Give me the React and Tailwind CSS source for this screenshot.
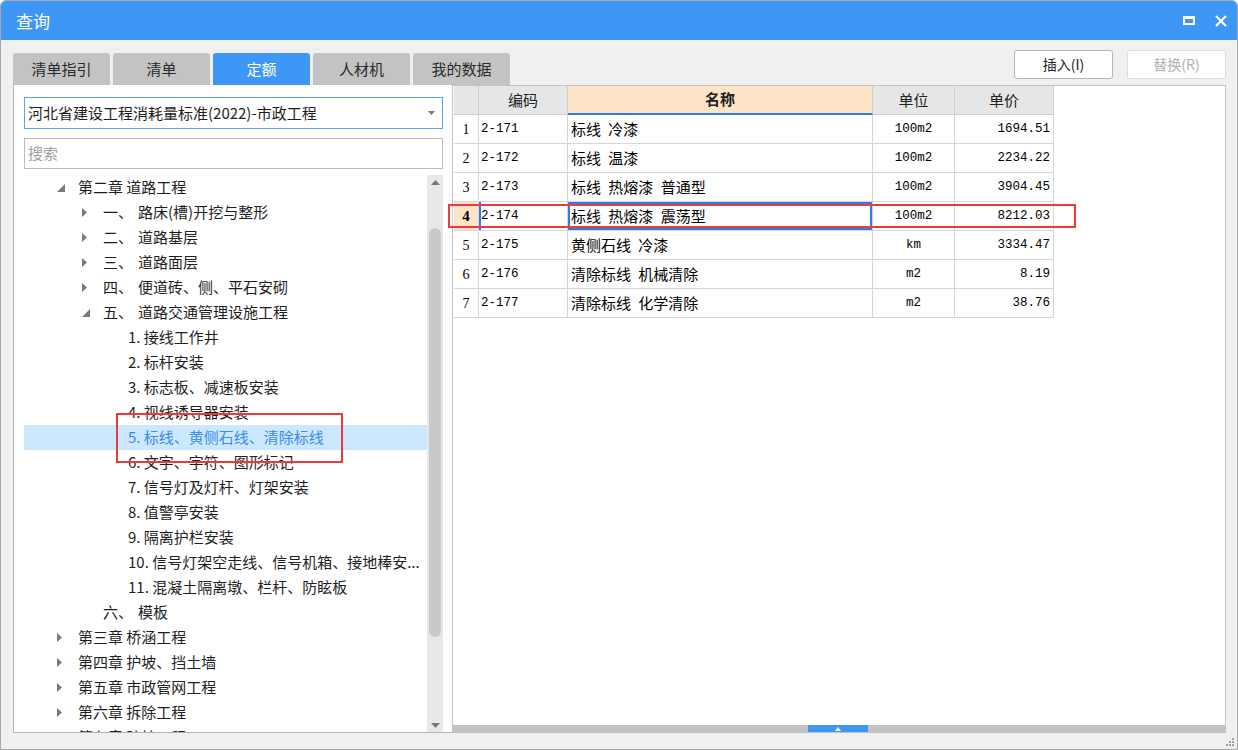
import React from 'react';

const cjk = "font-['Noto_Sans_CJK_SC',sans-serif]";
const mono = "font-['Liberation_Mono','Noto_Sans_CJK_SC',monospace]";

const tabs = ['清单指引', '清单', '定额', '人材机', '我的数据'];

const tree = [
  { lvl: 0, tri: 'open', text: '第二章 道路工程' },
  { lvl: 1, tri: 'closed', num: '一、', text: '路床(槽)开挖与整形' },
  { lvl: 1, tri: 'closed', num: '二、', text: '道路基层' },
  { lvl: 1, tri: 'closed', num: '三、', text: '道路面层' },
  { lvl: 1, tri: 'closed', num: '四、', text: '便道砖、侧、平石安砌' },
  { lvl: 1, tri: 'open', num: '五、', text: '道路交通管理设施工程' },
  { lvl: 2, text: '1. 接线工作井' },
  { lvl: 2, text: '2. 标杆安装' },
  { lvl: 2, text: '3. 标志板、减速板安装' },
  { lvl: 2, text: '4. 视线诱导器安装' },
  { lvl: 2, text: '5. 标线、黄侧石线、清除标线', sel: true },
  { lvl: 2, text: '6. 文字、字符、图形标记' },
  { lvl: 2, text: '7. 信号灯及灯杆、灯架安装' },
  { lvl: 2, text: '8. 值警亭安装' },
  { lvl: 2, text: '9. 隔离护栏安装' },
  { lvl: 2, text: '10. 信号灯架空走线、信号机箱、接地棒安...' },
  { lvl: 2, text: '11. 混凝土隔离墩、栏杆、防眩板' },
  { lvl: 1, num: '六、', text: '模板' },
  { lvl: 0, tri: 'closed', text: '第三章 桥涵工程' },
  { lvl: 0, tri: 'closed', text: '第四章 护坡、挡土墙' },
  { lvl: 0, tri: 'closed', text: '第五章 市政管网工程' },
  { lvl: 0, tri: 'closed', text: '第六章 拆除工程' },
  { lvl: 0, tri: 'closed', text: '第七章 防护工程' },
];

const pads = ['pl-[33px]', 'pl-[58px]', 'pl-[83px]'];

const rows = [
  { n: 1, code: '2-171', name: '标线 冷漆', unit: '100m2', price: '1694.51' },
  { n: 2, code: '2-172', name: '标线 温漆', unit: '100m2', price: '2234.22' },
  { n: 3, code: '2-173', name: '标线 热熔漆 普通型', unit: '100m2', price: '3904.45' },
  { n: 4, code: '2-174', name: '标线 热熔漆 震荡型', unit: '100m2', price: '8212.03', sel: true },
  { n: 5, code: '2-175', name: '黄侧石线 冷漆', unit: 'km', price: '3334.47' },
  { n: 6, code: '2-176', name: '清除标线 机械清除', unit: 'm2', price: '8.19' },
  { n: 7, code: '2-177', name: '清除标线 化学清除', unit: 'm2', price: '38.76' },
];

function Tri({ open }) {
  if (open) {
    return (
      <svg width="8" height="8" viewBox="0 0 8 8">
        <polygon points="8,0 8,8 0,8" fill="#7a7a7a" />
      </svg>
    );
  }
  return (
    <svg width="6" height="9" viewBox="0 0 6 9">
      <polygon points="0,0 5,4.5 0,9" fill="#7a7a7a" />
    </svg>
  );
}

function TreeRow({ item }) {
  return (
    <div
      className={`flex items-center h-[25px] pr-[2px] text-[15px] whitespace-nowrap ${pads[item.lvl]} ${
        item.sel ? 'bg-[#cce8ff] text-[#3a8be6]' : 'text-[#1e1e1e]'
      }`}
    >
      <span className="w-[21px] flex items-center shrink-0">
        {item.tri && <Tri open={item.tri === 'open'} />}
      </span>
      {item.num && <span className="w-[35px] shrink-0">{item.num}</span>}
      <span className="truncate min-w-0 flex-1">{item.text}</span>
    </div>
  );
}

export default function App() {
  return (
    <div className={`relative w-[1238px] h-[750px] border border-[#a8a8a8] rounded-t-[6px] overflow-hidden bg-[#f0f0f0] flex flex-col ${cjk}`}>
      {/* title bar */}
      <div className="h-[39px] bg-[#3e96f7] flex items-center justify-between pl-[15px] pr-[10px] shrink-0">
        <span className="text-white text-[17px]">查询</span>
        <div className="flex items-center gap-[20px]">
          <div className="w-[12px] h-[9px] border-2 border-t-[3px] border-white" />
          <svg width="12" height="12" viewBox="0 0 12 12">
            <path d="M1 1 L11 11 M11 1 L1 11" stroke="white" strokeWidth="2.2" />
          </svg>
        </div>
      </div>

      {/* tabs + buttons */}
      <div className="h-[45px] flex justify-between pl-[12px] pr-[11px] shrink-0">
        <div className="flex items-end gap-[3px]">
          {tabs.map((t) => (
            <div
              key={t}
              className={`w-[97px] h-[32px] rounded-t-[3px] flex items-center justify-center text-[15px] ${
                t === '定额' ? 'bg-[#3e96f7] text-white' : 'bg-[#c3c3c3] text-[#2a2a2a]'
              }`}
            >
              {t}
            </div>
          ))}
        </div>
        <div className="flex items-start gap-[14px] pt-[10px]">
          <button className="w-[99px] h-[29px] bg-white border border-[#b5b5b5] rounded-[3px] text-[14px] text-[#222]">
            插入(I)
          </button>
          <button className="w-[99px] h-[29px] bg-white border border-[#dcdcdc] rounded-[3px] text-[14px] text-[#b0b0b0]">
            替换(R)
          </button>
        </div>
      </div>

      {/* content */}
      <div className="h-[648px] flex pl-[12px] pr-[11px] shrink-0">
        {/* left panel */}
        <div className="w-[439px] bg-white border-l border-b border-[#b4b4b4] flex flex-col pl-[10px]">
          <div className="mt-[12px] w-[419px] h-[32px] border border-[#5aa4ef] flex items-center justify-between pl-[3px] pr-[7px] text-[15px] text-[#1e1e1e]">
            <span>河北省建设工程消耗量标准(2022)-市政工程</span>
            <svg width="7" height="4" viewBox="0 0 7 4">
              <polygon points="0,0 7,0 3.5,4" fill="#777" />
            </svg>
          </div>
          <div className="mt-[9px] w-[419px] h-[31px] border border-[#bcbcbc] flex items-center pl-[3px] text-[15px] text-[#a0a0a0]">
            搜索
          </div>
          <div className="mt-[6px] flex-1 flex min-h-0">
            <div className="w-[403px] overflow-hidden">
              {tree.map((it, i) => (
                <TreeRow key={i} item={it} />
              ))}
            </div>
            <div className="w-[16px] bg-[#e8e8e8] flex flex-col items-center">
              <div className="h-[14px] flex items-center justify-center">
                <svg width="9" height="5" viewBox="0 0 9 5">
                  <polygon points="0,5 9,5 4.5,0" fill="#777" />
                </svg>
              </div>
              <div className="mt-[39px] w-[12px] h-[409px] rounded-full bg-[#c9c9c9]" />
              <div className="flex-1" />
              <div className="h-[14px] flex items-center justify-center">
                <svg width="9" height="5" viewBox="0 0 9 5">
                  <polygon points="0,0 9,0 4.5,5" fill="#777" />
                </svg>
              </div>
            </div>
          </div>
        </div>

        {/* right panel */}
        <div className="w-[774px] bg-white border border-[#c2c2c2] flex flex-col">
          <div className="flex-1 pl-[1px] text-black">
            <div className="grid grid-cols-[25px_89px_305px_82px_99px] w-[600px]">
              <div className="h-[29px] bg-[#e6e6e6] border-r border-b border-[#d0d0d0]" />
              <div className="h-[29px] bg-[#e6e6e6] border-r border-b border-[#d0d0d0] flex items-center justify-center text-[15px] text-[#222]">编码</div>
              <div className="h-[29px] bg-[#fde4c6] border-r border-[#d0d0d0] border-b-2 border-b-[#2f7ce4] flex items-center justify-center text-[15px] font-bold text-[#222]">名称</div>
              <div className="h-[29px] bg-[#e6e6e6] border-r border-b border-[#d0d0d0] flex items-center justify-center text-[15px] text-[#222]">单位</div>
              <div className="h-[29px] bg-[#e6e6e6] border-r border-b border-[#d0d0d0] flex items-center justify-center text-[15px] text-[#222]">单价</div>
              {rows.map((r) => (
                <React.Fragment key={r.n}>
                  <div
                    className={`h-[29px] border-r border-b border-[#d6d6d6] flex items-center justify-center font-['Liberation_Serif',serif] text-[14px] ${
                      r.sel ? 'bg-[#fde4c6] font-bold text-[15px]' : 'bg-white'
                    }`}
                  >
                    {r.n}
                  </div>
                  <div
                    className={`h-[29px] border-r border-b border-[#d6d6d6] flex items-center pl-[2px] text-[12.5px] ${mono} ${
                      r.sel ? 'shadow-[inset_2px_0_0_#2f7ce4]' : ''
                    }`}
                  >
                    {r.code}
                  </div>
                  <div
                    className={`h-[29px] border-r border-b border-[#d6d6d6] flex items-center pl-[3px] text-[15px] [word-spacing:4px] ${
                      r.sel ? 'shadow-[inset_0_0_0_2px_#2f7ce4]' : ''
                    }`}
                  >
                    {r.name}
                  </div>
                  <div className={`h-[29px] border-r border-b border-[#d6d6d6] flex items-center justify-center text-[12.5px] ${mono}`}>
                    {r.unit}
                  </div>
                  <div className={`h-[29px] border-r border-b border-[#d6d6d6] flex items-center justify-end pr-[3px] text-[12.5px] ${mono}`}>
                    {r.price}
                  </div>
                </React.Fragment>
              ))}
            </div>
          </div>
          <div className="h-[7px] bg-[#c3c3c3] flex">
            <div className="ml-[355px] w-[60px] h-[7px] bg-[#3e96f7] flex items-center justify-center">
              <svg width="6" height="4" viewBox="0 0 6 4">
                <polygon points="0,4 6,4 3,0" fill="white" />
              </svg>
            </div>
          </div>
        </div>
      </div>

      {/* bottom strip with resize grip */}
      <div className="flex-1 flex justify-end items-end pr-[2px] pb-[2px]">
        <svg width="9" height="9" viewBox="0 0 9 9">
          <rect x="6" y="0" width="2" height="2" fill="#a0a0a0" />
          <rect x="3" y="3" width="2" height="2" fill="#a0a0a0" />
          <rect x="6" y="3" width="2" height="2" fill="#a0a0a0" />
          <rect x="0" y="6" width="2" height="2" fill="#a0a0a0" />
          <rect x="3" y="6" width="2" height="2" fill="#a0a0a0" />
          <rect x="6" y="6" width="2" height="2" fill="#a0a0a0" />
        </svg>
      </div>

      {/* annotation boxes */}
      <div className="absolute left-[115px] top-[412px] w-[227px] h-[50px] border-2 border-[#ec3a3a]" />
      <div className="absolute left-[447px] top-[203px] w-[628px] h-[24px] border-2 border-[#ec3a3a]" />
    </div>
  );
}
